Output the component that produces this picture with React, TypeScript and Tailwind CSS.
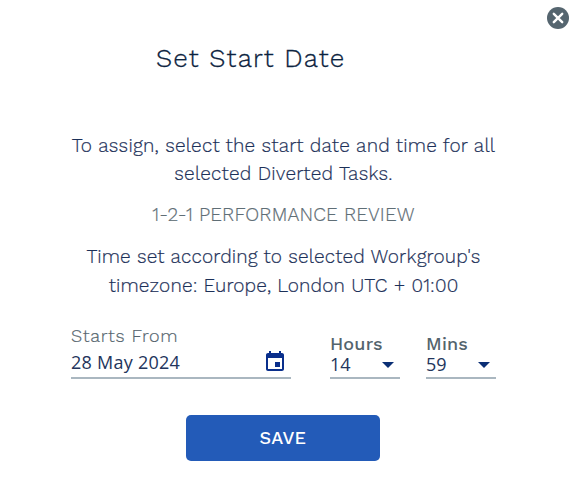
import React from 'react';

const font = "font-['Work_Sans','Inter',sans-serif]";

function CloseIcon() {
  return (
    <svg viewBox="0 0 22 22" className="block w-[22px] h-[22px]">
      <circle cx="11" cy="11" r="11" fill="#55656f" />
      <path d="M6.8 6.8l8.4 8.4M15.2 6.8l-8.4 8.4" stroke="#fff" strokeWidth="2.4" strokeLinecap="round" />
    </svg>
  );
}

function CalendarIcon() {
  return (
    <svg viewBox="0 0 24 24" className="block w-6 h-6 -mt-px" fill="#0a2f8c">
      <path d="M17 12h-5v5h5v-5zM16 1v2H8V1H6v2H5c-1.11 0-1.99.9-1.99 2L3 19c0 1.1.89 2 2 2h14c1.1 0 2-.9 2-2V5c0-1.1-.9-2-2-2h-1V1h-2zm3 18H5V8h14v11z" />
    </svg>
  );
}

interface TimeSelectProps {
  label: string;
  value: string;
}

function TimeSelect({ label, value }: TimeSelectProps) {
  return (
    <div className="w-[70px] h-[47px] mt-2 border-b-2 border-[#aab7c0]">
      <div className="h-[22px] leading-[24px] text-[18px] font-medium tracking-[0.2px] text-[#54646d] whitespace-nowrap">
        {label}
      </div>
      <div className="flex items-center justify-between h-5 pr-[6px]">
        <span className="font-['Open_Sans',sans-serif] text-[18px] leading-5 text-[#23355c]">{value}</span>
        <svg viewBox="0 0 12 6" className="w-3 h-1.5 mt-px" fill="#0b2f75">
          <path d="M0 0h12L6 6z" />
        </svg>
      </div>
    </div>
  );
}

export default function App() {
  return (
    <div className={`relative w-[576px] h-[501px] bg-white overflow-hidden text-[#1c3058] ${font}`}>
      <button className="absolute left-[547px] top-[7px]" aria-label="Close">
        <CloseIcon />
      </button>

      <h2 className="pt-[42px] pl-[156px] text-[26px] leading-8 font-light tracking-[1.28px] text-[#0c2340] whitespace-nowrap [-webkit-text-stroke:0.3px]">
        Set Start Date
      </h2>

      <div className="mt-[58px] w-[567px] text-center text-[19px] font-light whitespace-nowrap [-webkit-text-stroke:0.2px]">
        <p className="leading-7 tracking-[0.22px]">
          To assign, select the start date and time for all
          <br />
          selected Diverted Tasks.
        </p>
        <p className="mt-[13px] leading-7 tracking-[0.15px] text-[#5f6e76]">1-2-1 PERFORMANCE REVIEW</p>
        <p className="mt-[13px] leading-[29px] tracking-[0.16px]">
          Time set according to selected Workgroup's
          <br />
          timezone: Europe, London UTC + 01:00
        </p>
      </div>

      <div className="flex mt-6 pl-[71px]">
        <div className="w-[220px] h-[55px] mr-[39px] border-b-2 border-[#aab7c0]">
          <div className="h-[26px] leading-[24px] text-[18px] font-light tracking-[0.68px] text-[#54646d] [-webkit-text-stroke:0.2px]">
            Starts From
          </div>
          <div className="flex items-center justify-between h-[25px] pr-1">
            <span className="font-['Open_Sans',sans-serif] text-[18px] leading-[25px] tracking-[0.25px] text-[#23355c]">28 May 2024</span>
            <CalendarIcon />
          </div>
        </div>
        <TimeSelect label="Hours" value="14" />
        <div className="w-[26px]" />
        <TimeSelect label="Mins" value="59" />
      </div>

      <button className="block mt-9 ml-[186px] w-[194px] h-[46px] pb-0.5 rounded-[5px] bg-[#235bb8] text-white text-[18px] font-medium tracking-[0.3px]">
        SAVE
      </button>
    </div>
  );
}
